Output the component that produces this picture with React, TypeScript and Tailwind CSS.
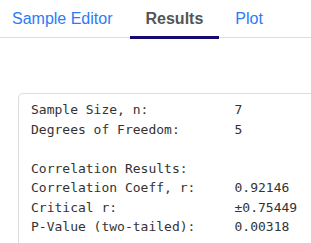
import React from 'react';

// ---------------------------------------------------------------------------
// Data
// ---------------------------------------------------------------------------

const tabs = ['Sample Editor', 'Results', 'Plot'];

const rows: [string, string][] = [
  ['Sample Size, n:', '7'],
  ['Degrees of Freedom:', '5'],
  ['', ''],
  ['Correlation Results:', ''],
  ['Correlation Coeff, r:', '0.92146'],
  ['Critical r:', '±0.75449'],
  ['P-Value (two-tailed):', '0.00318'],
];

const output = rows.map(([label, value]) => (value ? label.padEnd(26, ' ') + value : label)).join('\n');

// ---------------------------------------------------------------------------
// Component
// ---------------------------------------------------------------------------

export default function App() {
  const active = 'Results';

  return (
    <div className="h-[243px] w-[311px] overflow-hidden bg-white">
      <div className="flex h-[38px] border-b border-[#dddddd] font-['Liberation_Sans',Arial,sans-serif] text-[16px]">
        {tabs.map((tab, i) => (
          <div
            key={tab}
            className={
              'relative h-[38px] pt-[9px] leading-[20px] ' +
              (i === 0 ? 'pl-3 pr-4' : i === 1 ? 'ml-[1px] px-4' : 'px-4') +
              (tab === active ? ' font-bold text-[#555555]' : ' text-[#2b7bf7]')
            }
          >
            {tab}
            {tab === active && <div className="absolute bottom-[-1px] left-0 right-0 h-[3px] bg-[#150b6f]" />}
          </div>
        ))}
      </div>

      <div className="ml-[18px] mt-[55px] w-[320px] rounded-tl-[5px] border border-[#dddddd] px-3 pt-[6px] pb-4">
        <pre className="font-['DejaVu_Sans_Mono','Liberation_Mono',monospace] text-[13px] leading-[19.5px] text-[#333333]">
          {output}
        </pre>
      </div>
    </div>
  );
}
